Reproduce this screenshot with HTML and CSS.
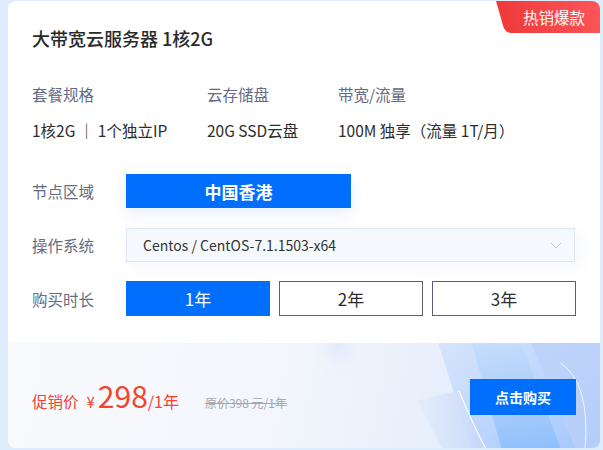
FILE: index.html
```html
<!DOCTYPE html>
<html lang="zh">
<head>
<meta charset="utf-8">
<link rel="stylesheet" href="styles.css">
</head>
<body>
<div class="card">
  <div class="badge"><span>热销爆款</span></div>
  <div class="main">
    <h1 class="title">大带宽云服务器 1核2G</h1>
    <div class="specs">
      <div class="spec spec-a"><div class="spec-label">套餐规格</div><div class="spec-value">1核2G ｜ 1个独立IP</div></div>
      <div class="spec spec-b"><div class="spec-label">云存储盘</div><div class="spec-value">20G SSD云盘</div></div>
      <div class="spec"><div class="spec-label">带宽/流量</div><div class="spec-value">100M 独享（流量 1T/月）</div></div>
    </div>
    <div class="row row-region">
      <div class="row-label">节点区域</div>
      <div class="btn btn-primary btn-region">中国香港</div>
    </div>
    <div class="row row-os">
      <div class="row-label">操作系统</div>
      <div class="select">
        <span>Centos / CentOS-7.1.1503-x64</span>
        <svg class="chev" width="12" height="7" viewBox="0 0 12 7"><path d="M1 1 L6 6 L11 1" fill="none" stroke="#c4c8d0" stroke-width="1"/></svg>
      </div>
    </div>
    <div class="row row-time">
      <div class="row-label">购买时长</div>
      <div class="years">
        <div class="btn btn-primary year">1年</div>
        <div class="btn btn-outline year">2年</div>
        <div class="btn btn-outline year">3年</div>
      </div>
    </div>
  </div>
  <div class="footer">
    <svg class="deco" width="600" height="106" viewBox="0 0 600 106" preserveAspectRatio="none">
      <defs>
        <linearGradient id="g1" x1="0" y1="0" x2="1" y2="1">
          <stop offset="0" stop-color="#cfe0fb" stop-opacity="0.7"/>
          <stop offset="1" stop-color="#9cc3fb" stop-opacity="0.9"/>
        </linearGradient>
        <linearGradient id="g2" x1="0" y1="0" x2="0" y2="1">
          <stop offset="0" stop-color="#b9d6fb" stop-opacity="0.6"/>
          <stop offset="1" stop-color="#7fb8fb" stop-opacity="0.9"/>
        </linearGradient>
        <linearGradient id="g3" x1="0" y1="0" x2="1" y2="0">
          <stop offset="0" stop-color="#e3ecfb" stop-opacity="0.9"/>
          <stop offset="1" stop-color="#c7d8f8" stop-opacity="0.9"/>
        </linearGradient>
        <radialGradient id="g4" cx="0.5" cy="0.4" r="0.5">
          <stop offset="0" stop-color="#dfe9fb" stop-opacity="0.9"/>
          <stop offset="1" stop-color="#eef3fc" stop-opacity="0"/>
        </radialGradient>
      </defs>
      <ellipse cx="335" cy="10" rx="30" ry="35" fill="url(#g4)"/>
      <path d="M436 0 L600 0 L600 106 L470 106 Z" fill="url(#g1)"/>
      <path d="M470 0 L520 0 L560 106 L500 106 Z" fill="url(#g2)" opacity="0.7"/>
      <path d="M530 0 L600 0 L600 106 L575 106 Z" fill="#bcd0f8" opacity="0.7"/>
      <path d="M560 20 Q590 40 585 106" fill="none" stroke="#ffffff" stroke-width="1" opacity="0.8"/>
      <path d="M415 58 L457 48 L484 106 L440 106 Z" fill="url(#g3)"/>
      <path d="M457 48 Q470 80 484 106" fill="none" stroke="#ffffff" stroke-width="1.2" opacity="0.9"/>
    </svg>
    <div class="price">
      <span class="price-label">促销价</span>
      <span class="yen">¥</span><span class="amount">298</span><span class="unit">/1年</span>
      <span class="orig">原价398 元/1年</span>
    </div>
    <div class="btn btn-primary buy">点击购买</div>
  </div>
</div>
</body>
</html>
```

FILE: styles.css
```css
* { box-sizing: border-box; }
body {
  margin: 0;
  background: #dfecfc;
  font-family: "Noto Sans CJK SC", "Noto Sans", sans-serif;
  width: 603px;
  height: 450px;
  overflow: hidden;
}
.card {
  position: relative;
  margin: 1px 0 0 8px;
  width: 592px;
  height: 447px;
  background: #ffffff;
  border-radius: 8px;
  overflow: hidden;
  display: flex;
  flex-direction: column;
}
.badge {
  position: absolute;
  top: 0;
  right: 0;
  width: 104px;
  height: 32px;
  color: #ffffff;
  font-size: 15.5px;
  line-height: 32px;
  display: flex;
  justify-content: flex-end;
  padding-right: 15px;
}
.badge::before {
  content: "";
  position: absolute;
  left: 0;
  top: 0;
  width: 130px;
  height: 32px;
  transform-origin: top left;
  transform: skewX(16deg);
  border-bottom-left-radius: 6px;
  background: linear-gradient(90deg, #ef3a3b, #ff5d62);
}
.badge span { position: relative; }
.main {
  padding: 25px 24px 0 24px;
  flex: 1;
}
.title {
  margin: 0;
  font-size: 18px;
  font-weight: 500;
  color: #2a2a2a;
  line-height: 24px;
}
.specs {
  display: flex;
  margin-top: 34px;
}
.spec-a { width: 175px; }
.spec-b { width: 131px; }
.spec-label {
  font-size: 15.5px;
  line-height: 20px;
  color: #646b82;
}
.spec-value {
  margin-top: 16px;
  font-size: 15.5px;
  line-height: 20px;
  color: #2d2d2d;
}
.row {
  display: flex;
  align-items: center;
}
.row-region { margin-top: 34px; }
.row-os { margin-top: 20px; }
.row-time { margin-top: 19px; }
.row-label {
  width: 94px;
  font-size: 15.5px;
  color: #646b82;
}
.btn {
  display: flex;
  align-items: center;
  justify-content: center;
}
.btn-primary {
  background: #006ffe;
  color: #ffffff;
}
.btn-region {
  width: 225px;
  height: 34px;
  font-size: 17px;
  font-weight: 700;
  box-shadow: 0 6px 14px rgba(40, 90, 200, 0.10);
}
.select {
  width: 449px;
  height: 34px;
  background: #f6faff;
  border: 1px solid #d9e7f6;
  display: flex;
  align-items: center;
  justify-content: space-between;
  padding: 0 12px 0 16px;
  font-size: 14px;
  color: #333333;
  box-shadow: 6px 4px 16px rgba(60, 90, 160, 0.05);
}
.years {
  display: flex;
  gap: 9px;
}
.year {
  width: 144px;
  height: 35px;
  font-size: 17px;
}
.btn-outline {
  border: 1px solid #5a6079;
  color: #2d2d2d;
  background: #ffffff;
}
.footer {
  position: relative;
  height: 105px;
  background: linear-gradient(100deg, #f9fafd 0%, #f3f6fc 45%, #e6eefb 75%, #dae6fb 100%);
  display: flex;
  align-items: center;
  justify-content: space-between;
  padding: 0 24px;
}
.deco {
  position: absolute;
  left: 0;
  top: 0;
  width: 592px;
  height: 105px;
}
.price {
  position: relative;
  display: flex;
  align-items: baseline;
  color: #f4432f;
  margin-top: 2px;
}
.price-label { font-size: 15.5px; }
.yen { font-size: 15px; margin-left: 8px; margin-right: 3px; }
.amount { font-size: 30px; line-height: 30px; }
.unit { font-size: 16px; }
.orig {
  margin-left: 26px;
  font-size: 12px;
  color: #a3a6ae;
  text-decoration: line-through;
}
.buy {
  position: relative;
  width: 106px;
  height: 36px;
  font-size: 14px;
  font-weight: 700;
  margin-top: 2px;
}
```
